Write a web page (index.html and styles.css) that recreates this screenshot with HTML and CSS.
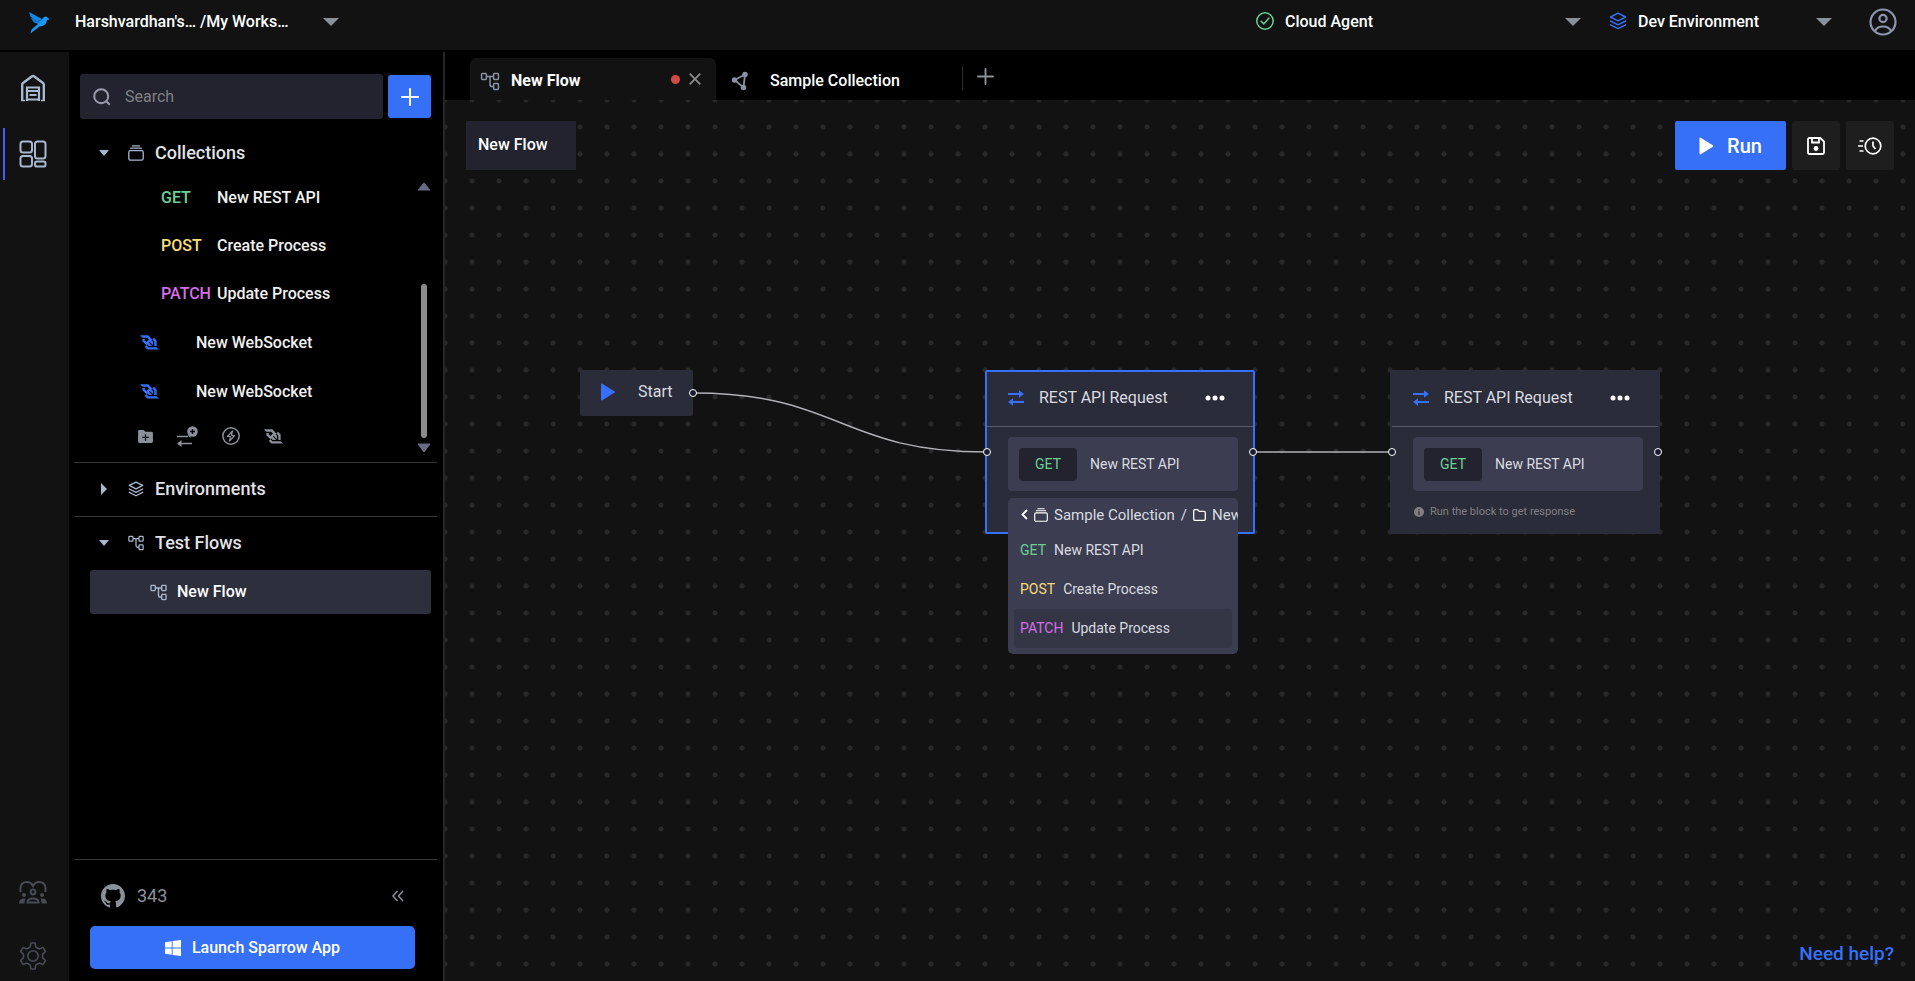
FILE: index.html
```html
<!DOCTYPE html>
<html lang="en">
<head>
<meta charset="utf-8">
<title>Sparrow - New Flow</title>
<link rel="stylesheet" href="styles.css">
</head>
<body>
<svg class="sprite" aria-hidden="true">
  <symbol id="caret" viewBox="0 0 16 8"><path d="M0 0h16L8 8z" fill="currentColor"/></symbol>
  <symbol id="flow" viewBox="0 0 18 18"><g fill="none" stroke="currentColor" stroke-width="1.4"><rect x="1" y="1.5" width="4.6" height="5.5" rx=".8"/><rect x="12.4" y="1.5" width="4.6" height="5.5" rx=".8"/><rect x="12.4" y="11" width="4.6" height="5.5" rx=".8"/><path d="M5.6 4.2h6.8M9 4.2v7.6q0 2 2 2h1.4"/></g></symbol>
  <symbol id="layers" viewBox="0 0 18 18"><g fill="none" stroke="currentColor" stroke-width="1.5" stroke-linejoin="round" stroke-linecap="round"><path d="M9 1.2 16.5 5 9 8.8 1.5 5z"/><path d="M1.5 9 9 12.8 16.5 9M1.5 12.8 9 16.6l7.5-3.8"/></g></symbol>
  <symbol id="stack" viewBox="0 0 16 16"><g fill="none" stroke="currentColor" stroke-width="1.3"><rect x=".8" y="5.6" width="14.4" height="9.6" rx="1.6"/><path d="M2.6 3.2h10.8M4.4.8h7.2" stroke-linecap="round"/></g></symbol>
  <symbol id="socket" viewBox="0 0 256 193"><path fill="currentColor" d="M192.4 144.6h31.8V68.3l-35.8-35.8L165.9 55l26.5 26.5zM224.3 160.6H113.5L87 134.1l11.2-11.3 21.9 21.9h45l-44.4-44.4L132 89l44.4 44.3v-45l-21.8-21.8 11.2-11.2L110.7 0H0l31.7 31.7v.1h65.7L120.7 55l-34 34-23.2-23.3v-18H31.7v31.2l55 55-22.4 22.4 35.8 35.8H256z"/></symbol>
  <symbol id="swap" viewBox="0 0 16 16"><path fill="currentColor" d="M0 3h11V.3L16 4l-5 3.700V5H0zM16 11H5V8.300L0 12l5 3.700V13h11z"/></symbol>
  <symbol id="play" viewBox="0 0 14 18"><path fill="currentColor" d="M0 1.500Q0 0 1.300.8l12 7.400q1.200.8 0 1.600l-12 7.400Q0 18 0 16.500z"/></symbol>
  <symbol id="plus" viewBox="0 0 18 18"><path d="M9 1v16M1 9h16" stroke="currentColor" stroke-width="2" stroke-linecap="round"/></symbol>
  <symbol id="more" viewBox="0 0 20 6"><g fill="currentColor"><circle cx="3" cy="3" r="2.500"/><circle cx="10" cy="3" r="2.500"/><circle cx="17" cy="3" r="2.500"/></g></symbol>
</svg>

<div class="app">
  <header class="topbar">
    <a class="logo" href="#" aria-label="Sparrow">
      <svg width="22" height="22" viewBox="0 0 22 22"><path fill="#1389e8" d="M1 0 13 6.500 14 9 6 7.500 2.500 4.500z"/><path fill="#0f7ad6" d="M2.500 5.500 13 9 11.500 12.500 6 10.500z"/><path fill="#1b97f5" d="M10 12 15.500 5.500Q17.500 3.500 19.500 5.500L21.500 7.500 19 8Q18.500 14 11.500 14.500L2.500 21.500 3.500 17.500z"/></svg>
    </a>
    <div class="picker picker-workspace">
      <select aria-label="Workspace"><option>Harshvardhan's… /My Works…</option></select>
      <svg class="picker-caret" width="16" height="8"><use href="#caret"/></svg>
    </div>
    <div class="picker picker-agent">
      <svg class="green" width="18" height="18" viewBox="0 0 18 18" fill="none" stroke="currentColor" stroke-width="1.500" stroke-linecap="round"><circle cx="9" cy="9" r="8.200"/><path d="m5.200 9.300 2.600 2.600 5.200-5.800"/></svg>
      <select aria-label="Agent"><option>Cloud Agent</option></select>
      <svg class="picker-caret" width="16" height="8"><use href="#caret"/></svg>
    </div>
    <div class="picker picker-env">
      <svg class="blue" width="18" height="18"><use href="#layers"/></svg>
      <select aria-label="Environment"><option>Dev Environment</option></select>
      <svg class="picker-caret" width="16" height="8"><use href="#caret"/></svg>
    </div>
    <button class="avatar" aria-label="Account">
      <svg width="28" height="28" viewBox="0 0 28 28" fill="none" stroke="currentColor" stroke-width="2.200"><circle cx="14" cy="14" r="12.500"/><circle cx="14" cy="10.500" r="3.600"/><path d="M6 23Q8 18.500 14 18.500T22 23"/></svg>
    </button>
  </header>

  <div class="body">
    <nav class="rail" aria-label="Main">
      <a href="#" class="rail-item" aria-label="Home">
        <svg width="26" height="28" viewBox="0 0 26 28" fill="none" stroke="currentColor" stroke-width="2.400"><path d="M2.200 27V10.500Q2.200 9.500 3 9L12 2.300Q13 1.500 14 2.300L23 9Q23.800 9.500 23.800 10.500V27"/><path d="M7 27V13.500h12V27M7 25.500h12M7 17h12M9.500 21h7" stroke-width="2.200"/><path d="M1 26.500h4M21 26.500h4" stroke-width="1.500"/></svg>
      </a>
      <a href="#" class="rail-item active" aria-label="Workspace">
        <svg width="28" height="28" viewBox="0 0 28 28" fill="none" stroke="currentColor" stroke-width="2"><rect x="1.500" y="1.500" width="11.500" height="11" rx="2.500"/><rect x="16" y="1.500" width="10.500" height="17" rx="2.500"/><rect x="1.500" y="16" width="11.500" height="10.500" rx="2.500"/><rect x="16" y="21.500" width="10.500" height="5" rx="1.800"/></svg>
      </a>
      <a href="#" class="rail-item dim push" aria-label="Community">
        <svg width="28" height="24" viewBox="0 0 28 24"><path d="M1.500 12V8.500Q1.500 2 8 2q4 0 6 4 2-4 6-4 6.500 0 6.500 6.500V12" fill="none" stroke="currentColor" stroke-width="2"/><g fill="none" stroke="currentColor" stroke-width="2"><circle cx="14" cy="12" r="2.400"/><path d="M8.500 22.500Q8.500 18.500 14 18.500t5.500 4z"/></g><g fill="currentColor"><circle cx="5" cy="15" r="2"/><circle cx="23" cy="15" r="2"/><path d="M0 23.500Q0 18.500 5 18.500l1.500.3Q5.500 21 5.500 23.500zM28 23.500q0-5-5-5l-1.500.3q1 2.200 1 4.700z"/></g></svg>
      </a>
      <a href="#" class="rail-item dim" aria-label="Settings">
        <svg width="28" height="28" viewBox="0 0 28 28" fill="none" stroke="currentColor" stroke-width="1.600" stroke-linejoin="round"><circle cx="14" cy="14" r="5.200"/><path d="M12 1h4l1 4.200 3 1.700 4.100-1.300 2.400 3.800-3 3v3.200l3 3-2.400 3.800-4.100-1.300-3 1.700L16 27h-4l-1-4.200-3-1.700-4.100 1.300-2.400-3.800 3-3v-3.200l-3-3 2.400-3.800L8 6.900l3-1.700z"/></svg>
      </a>
    </nav>

    <aside class="sidebar">
      <div class="search-row">
        <label class="search">
          <svg width="18" height="18" viewBox="0 0 18 18" fill="none" stroke="currentColor" stroke-width="2"><circle cx="8.200" cy="8.200" r="7"/><path d="m13 13 3.800 3.800"/></svg>
          <input type="search" placeholder="Search" aria-label="Search">
        </label>
        <button class="add" aria-label="Add"><svg width="18" height="18"><use href="#plus"/></svg></button>
      </div>

      <section class="group">
        <button class="group-head"><svg class="fold" width="10" height="6" viewBox="0 0 10 6"><path d="M0 0h10L5 6z" fill="currentColor"/></svg><svg width="16" height="16"><use href="#stack"/></svg>Collections</button>
        <div class="scroll">
          <ul class="tree">
            <li><a href="#" class="request"><span class="verb green">GET</span>New REST API</a></li>
            <li><a href="#" class="request"><span class="verb yellow">POST</span>Create Process</a></li>
            <li><a href="#" class="request"><span class="verb pink">PATCH</span>Update Process</a></li>
            <li><a href="#" class="ws"><svg class="blue" width="19" height="15"><use href="#socket"/></svg>New WebSocket</a></li>
            <li><a href="#" class="ws"><svg class="blue" width="19" height="15"><use href="#socket"/></svg>New WebSocket</a></li>
          </ul>
          <div class="quick">
            <button aria-label="Add folder"><svg width="15" height="13" viewBox="0 0 16 14"><path fill="currentColor" fill-rule="evenodd" d="M1.500 0H6l2 2h6.500Q16 2 16 3.500v9Q16 14 14.500 14h-13Q0 14 0 12.500v-11Q0 0 1.500 0zM7.300 4.500v2.800H4.500v1.400h2.800v2.800h1.400V8.700h2.800V7.300H8.700V4.500z"/></svg></button>
            <button aria-label="Add request"><svg width="21" height="21" viewBox="0 0 21 21"><circle cx="15.500" cy="5.500" r="5.300" fill="currentColor"/><path d="M15.500 3v5M13 5.500h5" stroke="#000" stroke-width="1.300"/><path d="M0 10.500h11M4 17.500h11" stroke="currentColor" stroke-width="1.500"/><path d="M10.500 9 13.500 12v-2zM0 17.500l4.500-3.500v7z" fill="currentColor"/></svg></button>
            <button aria-label="Add event"><svg width="18" height="18" viewBox="0 0 18 18" fill="none" stroke="currentColor" stroke-width="1.500"><circle cx="9" cy="9" r="8.200"/><path d="M10.500 4 5.500 9.500H8.500L7.500 14 12.500 8.500H9.500z" stroke-width="1.200" stroke-linejoin="round"/></svg></button>
            <button aria-label="Add WebSocket"><svg width="19" height="15"><use href="#socket"/></svg></button>
          </div>
          <svg class="bar" width="14" height="271" viewBox="0 0 14 271"><path d="M1 8 7 1l6 7zM1 262h12l-6 8z" fill="#6b6b85" stroke="#6b6b85" stroke-linejoin="round"/><rect x="4" y="102" width="6" height="154" rx="3" fill="#8b8b8b"/></svg>
        </div>
      </section>

      <section class="group">
        <button class="group-head"><svg class="fold" width="10" height="12" viewBox="0 0 10 12"><path d="M2 0v12l6-6z" fill="currentColor"/></svg><svg width="16" height="16"><use href="#layers"/></svg>Environments</button>
      </section>

      <section class="group">
        <button class="group-head"><svg class="fold" width="10" height="6" viewBox="0 0 10 6"><path d="M0 0h10L5 6z" fill="currentColor"/></svg><svg width="16" height="16"><use href="#flow"/></svg>Test Flows</button>
        <a href="#" class="flow-item"><svg width="17" height="17"><use href="#flow"/></svg>New Flow</a>
      </section>

      <footer class="side-foot">
        <div class="stars">
          <a href="#"><svg width="24" height="24" viewBox="0 0 16 16"><path fill="currentColor" d="M8 0C3.580 0 0 3.580 0 8c0 3.540 2.290 6.530 5.470 7.590.4.070.55-.17.55-.38 0-.19-.01-.82-.01-1.490-2.010.37-2.530-.49-2.690-.94-.09-.23-.48-.94-.82-1.130-.28-.15-.68-.52-.01-.53.63-.01 1.080.58 1.230.82.72 1.210 1.870.87 2.330.66.07-.52.28-.87.51-1.070-1.780-.2-3.640-.89-3.640-3.950 0-.87.31-1.590.82-2.150-.08-.2-.36-1.020.08-2.120 0 0 .67-.21 2.200.82.640-.18 1.320-.27 2-.27s1.360.09 2 .27c1.530-1.040 2.200-.82 2.200-.82.440 1.100.16 1.920.08 2.120.51.56.82 1.270.82 2.150 0 3.070-1.870 3.750-3.650 3.950.29.25.54.73.54 1.480 0 1.070-.01 1.930-.01 2.200 0 .21.15.46.55.38A8.010 8.010 0 0 0 16 8c0-4.420-3.580-8-8-8z"/></svg>343</a>
          <button aria-label="Collapse"><svg width="12" height="12" viewBox="0 0 12 12" fill="none" stroke="currentColor" stroke-width="1.500"><path d="M5.500 1 1 6l4.500 5M11 1 6.500 6l4.500 5"/></svg></button>
        </div>
        <button class="launch"><svg width="16" height="16" viewBox="0 0 16 16" fill="#fff"><path d="M0 2.200 6.700 1.300v6.200H0zM7.600 1.100 16 0v7.500H7.600zM0 8.500h6.700v6.200L0 13.800zM7.600 8.500H16V16l-8.400-1.100z"/></svg>Launch Sparrow App</button>
      </footer>
    </aside>

    <main class="main">
      <div class="tabs" role="tablist">
        <div class="tab current">
          <button class="tab-title" role="tab" aria-selected="true"><svg width="20" height="19"><use href="#flow"/></svg>New Flow</button>
          <i class="unsaved"></i>
          <button class="close" aria-label="Close tab"><svg width="12" height="12" viewBox="0 0 12 12"><path d="m.7.7 10.600 10.600m0-10.600L.7 11.300" stroke="currentColor" stroke-width="1.800"/></svg></button>
        </div>
        <div class="tab">
          <button class="tab-title wide" role="tab" aria-selected="false"><svg width="18" height="20" viewBox="0 0 18 20"><g fill="currentColor"><circle cx="3.500" cy="9" r="2.700"/><circle cx="14" cy="3.500" r="2.700"/><circle cx="12.500" cy="16.500" r="2.700"/></g><path d="M3.500 9 14 3.500l-1.500 13z" fill="none" stroke="currentColor" stroke-width="1.800"/></svg>Sample Collection</button>
        </div>
        <button class="new-tab" aria-label="New tab"><svg width="17" height="17"><use href="#plus"/></svg></button>
      </div>

      <div class="canvas">
        <div class="toolbar">
          <input class="flow-name" value="New Flow" aria-label="Flow name">
          <div class="actions">
            <button class="run"><svg width="15" height="18"><use href="#play"/></svg>Run</button>
            <button class="tool" aria-label="Save"><svg width="18" height="18" viewBox="0 0 18 18" fill="none" stroke="currentColor" stroke-width="1.800"><path d="M1 2.500Q1 1 2.500 1h10.800L17 4.700v10.800q0 1.500-1.500 1.500h-13Q1 17 1 15.500z"/><path d="M5 1v4.500h7V1"/><circle cx="9" cy="11.500" r="2.400" fill="currentColor" stroke="none"/></svg></button>
            <button class="tool" aria-label="Run history"><svg width="24" height="18" viewBox="0 0 24 18" fill="none" stroke="currentColor" stroke-width="1.700"><circle cx="15" cy="9" r="7.800"/><path d="M15 4.500V9l2.500 3M1.500 4h4M0 9h5M1.500 14h4"/></svg></button>
          </div>
        </div>

        <svg class="edges" fill="none" stroke="#b1b1b7" stroke-width="1.350"><path d="M248 293C395 293 395 352 542 352"/><path d="M808 352H947"/></svg>

        <article class="node start"><svg class="blue" width="14" height="18"><use href="#play"/></svg>Start<i class="port start-out"></i></article>

        <article class="node block first selected">
          <header class="node-head"><svg class="blue" width="16" height="16"><use href="#swap"/></svg><h2>REST API Request</h2><button aria-label="More"><svg width="20" height="6"><use href="#more"/></svg></button></header>
          <div class="node-body">
            <button class="pick"><span class="chip">GET</span>New REST API</button>
            <div class="menu">
              <div class="crumbs"><svg width="7" height="11" viewBox="0 0 7 11"><path d="M6 1 1.500 5.500 6 10" fill="none" stroke="#fff" stroke-width="1.800"/></svg><svg class="crumb-stack" width="14" height="14"><use href="#stack"/></svg><span>Sample Collection</span><span>/</span><svg width="13" height="12" viewBox="0 0 13 12"><path d="M.7 1.800q0-1.100 1.100-1.100h2.900l1.500 1.600h5q1.100 0 1.100 1.100v6.800q0 1.100-1.100 1.100H1.800q-1.100 0-1.100-1.100z" fill="none" stroke="#fff" stroke-width="1.300"/></svg><span>New</span></div>
              <button class="option"><span class="green">GET</span>New REST API</button>
              <button class="option"><span class="yellow">POST</span>Create Process</button>
              <button class="option hover"><span class="pink">PATCH</span>Update Process</button>
            </div>
          </div>
          <i class="port port-in"></i><i class="port port-out"></i>
        </article>

        <article class="node block second">
          <header class="node-head"><svg class="blue" width="16" height="16"><use href="#swap"/></svg><h2>REST API Request</h2><button aria-label="More"><svg width="20" height="6"><use href="#more"/></svg></button></header>
          <div class="node-body">
            <button class="pick"><span class="chip">GET</span>New REST API</button>
            <p class="hint"><svg width="10" height="10" viewBox="0 0 10 10"><circle cx="5" cy="5" r="5" fill="currentColor"/><path d="M5 4.300V8M5 2v1.300" stroke="#2b2c3a" stroke-width="1.200"/></svg>Run the block to get response</p>
          </div>
          <i class="port port-in"></i><i class="port port-out"></i>
        </article>

        <a class="help" href="#">Need help?</a>
      </div>
    </main>
  </div>
</div>
</body>
</html>
```

FILE: styles.css
```css
* { box-sizing: border-box; margin: 0; padding: 0; }
body { background: #000; color: #fff; font: 500 16px/24px Roboto, "Liberation Sans", sans-serif; }
button, input, select { font: inherit; color: inherit; background: none; border: 0; outline: 0; }
button { display: flex; align-items: center; }
a { color: inherit; text-decoration: none; }
ul { list-style: none; }
svg { flex: none; display: block; }
.sprite { position: absolute; width: 0; height: 0; }

.green { color: #6ad097; }
.yellow { color: #f7dc7b; }
.pink { color: #d66ee8; }
.blue { color: #3670f7; }

.app { display: flex; flex-direction: column; height: 100vh; }

/* top bar */
.topbar { display: flex; align-items: center; height: 50px; padding: 0 18px 14px 28px; background: #121212; flex: none; }
.logo { margin: 10px 25px 0 0; }
.picker { display: flex; align-items: center; gap: 11px; }
.picker select { flex: 1; min-width: 0; appearance: none; height: 24px; margin-top: 8px; }
.picker > svg { margin-top: 6px; }
.picker > .picker-caret { margin-top: 8px; color: #8a9199; pointer-events: none; }
.picker-workspace { width: 264px; }
.picker-agent { width: 325px; margin-left: auto; }
.picker-env { width: 223px; margin-left: 28px; }
.avatar { margin: 8px 0 0 37px; color: #8d95ad; }

.body { display: flex; flex: 1; min-height: 0; margin-top: 2px; }

/* icon rail */
.rail { display: flex; flex-direction: column; align-items: center; width: 69px; flex: none; background: #121212; padding: 10px 3px 0; gap: 14px; }
.rail-item { display: flex; align-items: center; justify-content: center; width: 100%; height: 52px; padding-right: 6px; color: #a9b7cf; border-left: 2px solid transparent; }
.rail-item.active { border-left-color: #4a5ef7; }
.rail-item.dim { height: 50px; color: #474b54; }
.rail-item.push { margin-top: auto; }

/* sidebar */
.sidebar { display: flex; flex-direction: column; width: 376px; flex: none; border-right: 2px solid #262626; }
.search-row { display: flex; align-items: center; gap: 5px; padding: 22px 12px 8px 11px; }
.search { flex: 1; display: flex; align-items: center; gap: 14px; height: 45px; padding: 0 13px; background: #22232e; border-radius: 3px; color: #9a9bad; }
.search input { flex: 1; min-width: 0; font-weight: 400; color: #fff; }
.search input::placeholder { color: #808084; }
.add { justify-content: center; width: 43px; height: 43px; background: #3670f7; border-radius: 3px; }
.group { margin: 0 6px 0 5px; border-bottom: 1px solid #363636; }
.group:last-of-type { border-bottom: 0; }
.group-head { width: 100%; height: 44px; margin: 4px 0 5px; padding-left: 25px; gap: 11px; color: #e0e2e8; font-size: 18px; }
.group-head svg { color: #a9b7cf; }
.group-head .fold { margin-right: 8px; }
.scroll { position: relative; margin-top: -6px; padding-bottom: 6px; }
.tree a { display: flex; align-items: center; height: 48px; color: #f0f0f0; }
.tree .request { padding-left: 87px; }
.tree .ws { height: 49px; padding-left: 66px; gap: 37px; }
.verb { width: 56px; }
.quick { display: flex; align-items: center; height: 40px; padding-left: 64px; gap: 24px; color: #8a9199; }
.bar { position: absolute; right: 6px; top: 8px; }
.flow-item { display: flex; align-items: center; gap: 10px; height: 44px; margin: 1px 6px 0 16px; padding-left: 60px; background: #2e2f3d; border-radius: 3px; color: #fff; }
.flow-item svg { color: #a9b7cf; }
.side-foot { margin: auto 6px 0 5px; border-top: 1px solid #363636; padding: 24px 22px 12px 16px; }
.stars { display: flex; align-items: center; justify-content: space-between; padding: 0 11px; margin-bottom: 18px; color: #8a9199; }
.stars a { display: flex; align-items: center; gap: 12px; font-weight: 400; font-size: 18px; }
.launch { justify-content: center; width: 100%; height: 43px; gap: 11px; background: #3670f7; border-radius: 5px; }

/* tabs */
.main { flex: 1; min-width: 0; display: flex; flex-direction: column; }
.tabs { display: flex; align-items: flex-end; height: 48px; padding-left: 25px; flex: none; }
.tab { display: flex; align-items: center; width: 246px; height: 42px; padding: 0 15px 0 10px; border-radius: 6px 6px 0 0; }
.tab.current { background: #121212; font-weight: 700; }
.tab-title { flex: 1; gap: 11px; height: 42px; padding-top: 4px; }
.tab-title svg { color: #8a93a3; }
.tab-title.wide { gap: 21px; padding-left: 5px; }
.unsaved { width: 9px; height: 9px; margin-right: 9px; border-radius: 50%; background: #d04a4a; }
.close { color: #8b8b8b; }
.new-tab { height: 24px; margin-bottom: 10px; padding: 0 0 4px 14px; border-left: 1px solid #2b2b2b; color: #8a9199; }

/* canvas */
.canvas { position: relative; flex: 1; overflow: hidden; background: #121212 radial-gradient(circle at 14px 14px, #292929 2px, transparent 3px) -14px -14px / 27px 27px; }
.toolbar { display: flex; justify-content: space-between; padding: 21px 21px 0; }
.flow-name { width: 110px; height: 49px; padding: 0 12px 2px; background: #22232e; }
.actions { display: flex; gap: 6px; }
.run { justify-content: center; gap: 13px; width: 111px; height: 49px; background: #3670f7; border-radius: 2px; font-size: 20px; }
.tool { justify-content: center; width: 48px; height: 49px; background: #1e1e1e; border-radius: 3px; }
.edges { position: absolute; inset: 0; width: 100%; height: 100%; }

.node { position: absolute; background: #2b2c3a; border-radius: 2px; color: #d9dbe0; font-weight: 400; }
.start { left: 135px; top: 270px; width: 113px; height: 46px; display: flex; align-items: center; gap: 23px; padding: 0 20px 2px 21px; }
.block { top: 270px; width: 270px; height: 164px; border: 2px solid transparent; }
.first { left: 540px; }
.second { left: 945px; }
.selected { border-color: #3670f7; }
.node-head { display: flex; align-items: center; height: 55px; padding: 0 28px 2px 21px; border-bottom: 1px solid #5a5b6b; }
.node-head h2 { flex: 1; margin-left: 15px; font-size: 16px; font-weight: 400; }
.node-head button { color: #fff; }
.node-body { position: relative; padding: 10px 15px 0 21px; }
.pick { width: 100%; height: 54px; padding-left: 11px; gap: 13px; background: #3c3d50; border-radius: 4px; font-size: 14px; }
.chip { width: 58px; height: 33px; line-height: 32px; border-radius: 4px; background: #22232e; color: #6ad097; text-align: center; }
.menu { position: absolute; left: 21px; right: 15px; top: 71px; height: 156px; padding: 0 6px; background: #3c3d50; border-radius: 5px; z-index: 1; overflow: hidden; font-size: 14px; }
.crumbs { display: flex; align-items: center; gap: 6px; height: 33px; margin-right: -6px; padding-left: 7px; font-size: 15px; white-space: nowrap; }
.crumb-stack { color: #fff; }
.option { width: 100%; height: 39px; padding: 0 0 2px 6px; gap: 8px; border-radius: 3px; }
.option.hover { background: #353645; }
.hint { display: flex; align-items: center; gap: 6px; margin-top: 9px; padding-left: 1px; font-size: 11px; color: #808084; }
.port { position: absolute; width: 8px; height: 8px; border: 1px solid #fff; border-radius: 50%; background: #1a1b2e; z-index: 2; }
.start-out { right: -4px; top: 19px; }
.port-in { left: -4px; top: 76px; }
.port-out { right: -4px; top: 76px; }
.help { position: absolute; right: 21px; bottom: 15px; font-size: 19px; color: #3670f7; }
```
